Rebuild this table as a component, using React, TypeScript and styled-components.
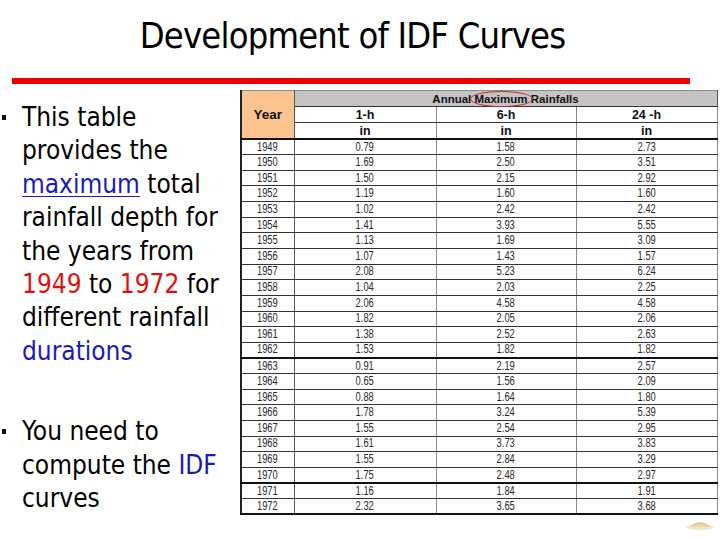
import styled, { createGlobalStyle } from 'styled-components';

const GlobalStyle = createGlobalStyle`
  html, body {
    margin: 0;
    padding: 0;
    background: #ffffff;
  }
`;

type Row = [string, string, string, string];

const ROWS: Row[] = [
  ['1949', '0.79', '1.58', '2.73'],
  ['1950', '1.69', '2.50', '3.51'],
  ['1951', '1.50', '2.15', '2.92'],
  ['1952', '1.19', '1.60', '1.60'],
  ['1953', '1.02', '2.42', '2.42'],
  ['1954', '1.41', '3.93', '5.55'],
  ['1955', '1.13', '1.69', '3.09'],
  ['1956', '1.07', '1.43', '1.57'],
  ['1957', '2.08', '5.23', '6.24'],
  ['1958', '1.04', '2.03', '2.25'],
  ['1959', '2.06', '4.58', '4.58'],
  ['1960', '1.82', '2.05', '2.06'],
  ['1961', '1.38', '2.52', '2.63'],
  ['1962', '1.53', '1.82', '1.82'],
  ['1963', '0.91', '2.19', '2.57'],
  ['1964', '0.65', '1.56', '2.09'],
  ['1965', '0.88', '1.64', '1.80'],
  ['1966', '1.78', '3.24', '5.39'],
  ['1967', '1.55', '2.54', '2.95'],
  ['1968', '1.61', '3.73', '3.83'],
  ['1969', '1.55', '2.84', '3.29'],
  ['1970', '1.75', '2.48', '2.97'],
  ['1971', '1.16', '1.84', '1.91'],
  ['1972', '2.32', '3.65', '3.68'],
];

// rows followed by a heavy rule
const THICK_AFTER = ['1962', '1970', '1972'];

const App = () => {
  return (
    <>
      <GlobalStyle />
      <Slide>
        <Title>Development of IDF Curves</Title>
        <RedBar />
        <Content>
          <TextColumn>
            <Bullet>
              <Marker />
              <BulletText>
                This table provides the <Link>maximum</Link> total rainfall depth for the
                years from <Red>1949</Red> to <Red>1972</Red> for different rainfall{' '}
                <Blue>durations</Blue>
              </BulletText>
            </Bullet>
            <Bullet $gap>
              <Marker />
              <BulletText>
                You need to compute the <Blue>IDF</Blue> curves
              </BulletText>
            </Bullet>
          </TextColumn>

          <Table>
            <colgroup>
              <col style={{ width: 53 }} />
              <col style={{ width: 142 }} />
              <col style={{ width: 140 }} />
              <col style={{ width: 141 }} />
            </colgroup>
            <thead>
              <tr>
                <YearHead rowSpan={3}>Year</YearHead>
                <GroupHead colSpan={3}>
                  Annual <Circled>Maximum</Circled> Rainfalls
                </GroupHead>
              </tr>
              <tr>
                <SubHead>1-h</SubHead>
                <SubHead>6-h</SubHead>
                <SubHead>24 -h</SubHead>
              </tr>
              <tr>
                <SubHead $last>in</SubHead>
                <SubHead $last>in</SubHead>
                <SubHead $last>in</SubHead>
              </tr>
            </thead>
            <tbody>
              {ROWS.map((r) => (
                <DataRow key={r[0]} $thick={THICK_AFTER.includes(r[0])}>
                  <YearCell>
                    <Num>{r[0]}</Num>
                  </YearCell>
                  <Cell>
                    <Num>{r[1]}</Num>
                  </Cell>
                  <Cell>
                    <Num>{r[2]}</Num>
                  </Cell>
                  <Cell>
                    <Num>{r[3]}</Num>
                  </Cell>
                </DataRow>
              ))}
            </tbody>
          </Table>
        </Content>
        <Footer>
          <Seal width="30" height="12" viewBox="0 0 30 12">
            <ellipse cx="15" cy="9" rx="14" ry="3" fill="#efe6c9" />
            <path d="M4 9 Q15 -1 26 9 Z" fill="#e6d8ad" />
            <path d="M8 8 Q15 3 22 8" stroke="#c9b57e" strokeWidth="0.8" fill="none" />
          </Seal>
        </Footer>
      </Slide>
    </>
  );
};

export default App;

const Slide = styled.div`
  width: 720px;
  height: 540px;
  display: flex;
  flex-direction: column;
  overflow: hidden;
  background: #ffffff;
`;

const Title = styled.h1`
  margin: 0;
  padding: 14px 15px 0 0;
  text-align: center;
  font-family: 'DejaVu Sans Condensed', 'DejaVu Sans', sans-serif;
  font-weight: normal;
  font-size: 36px;
  letter-spacing: -0.8px;
  line-height: 44px;
  color: #000000;
`;

const RedBar = styled.div`
  height: 6px;
  margin: 20px 30px 0 12px;
  background: #ee0000;
`;

const Content = styled.div`
  display: flex;
  margin-top: 6px;
`;

const TextColumn = styled.div`
  width: 240px;
  flex-shrink: 0;
  padding-top: 11px;
  box-sizing: border-box;
`;

const Bullet = styled.div<{ $gap?: boolean }>`
  display: flex;
  align-items: flex-start;
  margin-top: ${(p) => (p.$gap ? '47px' : '0')};
`;

const Marker = styled.span`
  width: 4px;
  height: 5px;
  background: #111111;
  margin: 14px 16px 0 2px;
  flex-shrink: 0;
`;

const BulletText = styled.p`
  margin: 0;
  max-width: 205px;
  font-family: 'DejaVu Sans Condensed', 'DejaVu Sans', sans-serif;
  font-size: 26px;
  line-height: 33.4px;
  color: #000000;
`;

const Link = styled.span`
  color: #1a1ab8;
  text-decoration: underline;
  text-decoration-thickness: 1px;
  text-underline-offset: 3px;
`;

const Red = styled.span`
  color: #dd1111;
`;

const Blue = styled.span`
  color: #1a1ab8;
`;

const Table = styled.table`
  width: 476px;
  table-layout: fixed;
  border-collapse: collapse;
  font-family: 'Liberation Sans', Arial, sans-serif;
  font-size: 12px;
  color: #222222;
  border-left: 2px solid #222222;
  border-right: 1px solid #555555;
  border-top: 1px solid #8c8c8c;
`;

const HeadBase = styled.th`
  padding: 0;
  font-weight: bold;
  text-align: center;
  color: #111111;
  height: 15px;
  line-height: 14px;
`;

const YearHead = styled(HeadBase)`
  background: #fac38f;
  border-right: 1px solid #555555;
  border-bottom: 2px solid #111111;
  font-size: 13.5px;
`;

const GroupHead = styled(HeadBase)`
  background: #c4c4c4;
  border-bottom: 1px solid #333333;
  font-size: 11.5px;
`;

const SubHead = styled(HeadBase)<{ $last?: boolean }>`
  background: #ffffff;
  font-size: 12.5px;
  border-right: 1px solid #8a8a8a;
  border-bottom: ${(p) => (p.$last ? '2px solid #111111' : '1px solid #333333')};
`;

const Circled = styled.span`
  position: relative;
  z-index: 1;

  &::after {
    content: '';
    position: absolute;
    left: -5px;
    right: -5px;
    top: -2px;
    bottom: -2px;
    border: 1.6px solid #cc2a2a;
    border-radius: 50%;
  }
`;

const DataRow = styled.tr<{ $thick?: boolean }>`
  height: 15.58px;

  & > td {
    border-bottom: ${(p) => (p.$thick ? '2px solid #111111' : '1px solid #333333')};
  }
`;

const Cell = styled.td`
  padding: 0;
  text-align: center;
  line-height: 13px;
  border-right: 1px solid #8a8a8a;
`;

const YearCell = styled(Cell)`
  border-right: 1px solid #555555;
`;

const Num = styled.span`
  display: inline-block;
  transform: scaleX(0.78);
  color: #2a2a2a;
`;

const Footer = styled.div`
  display: flex;
  justify-content: flex-end;
  padding: 3px 5px 0 0;
`;

const Seal = styled.svg`
  display: block;
`;
